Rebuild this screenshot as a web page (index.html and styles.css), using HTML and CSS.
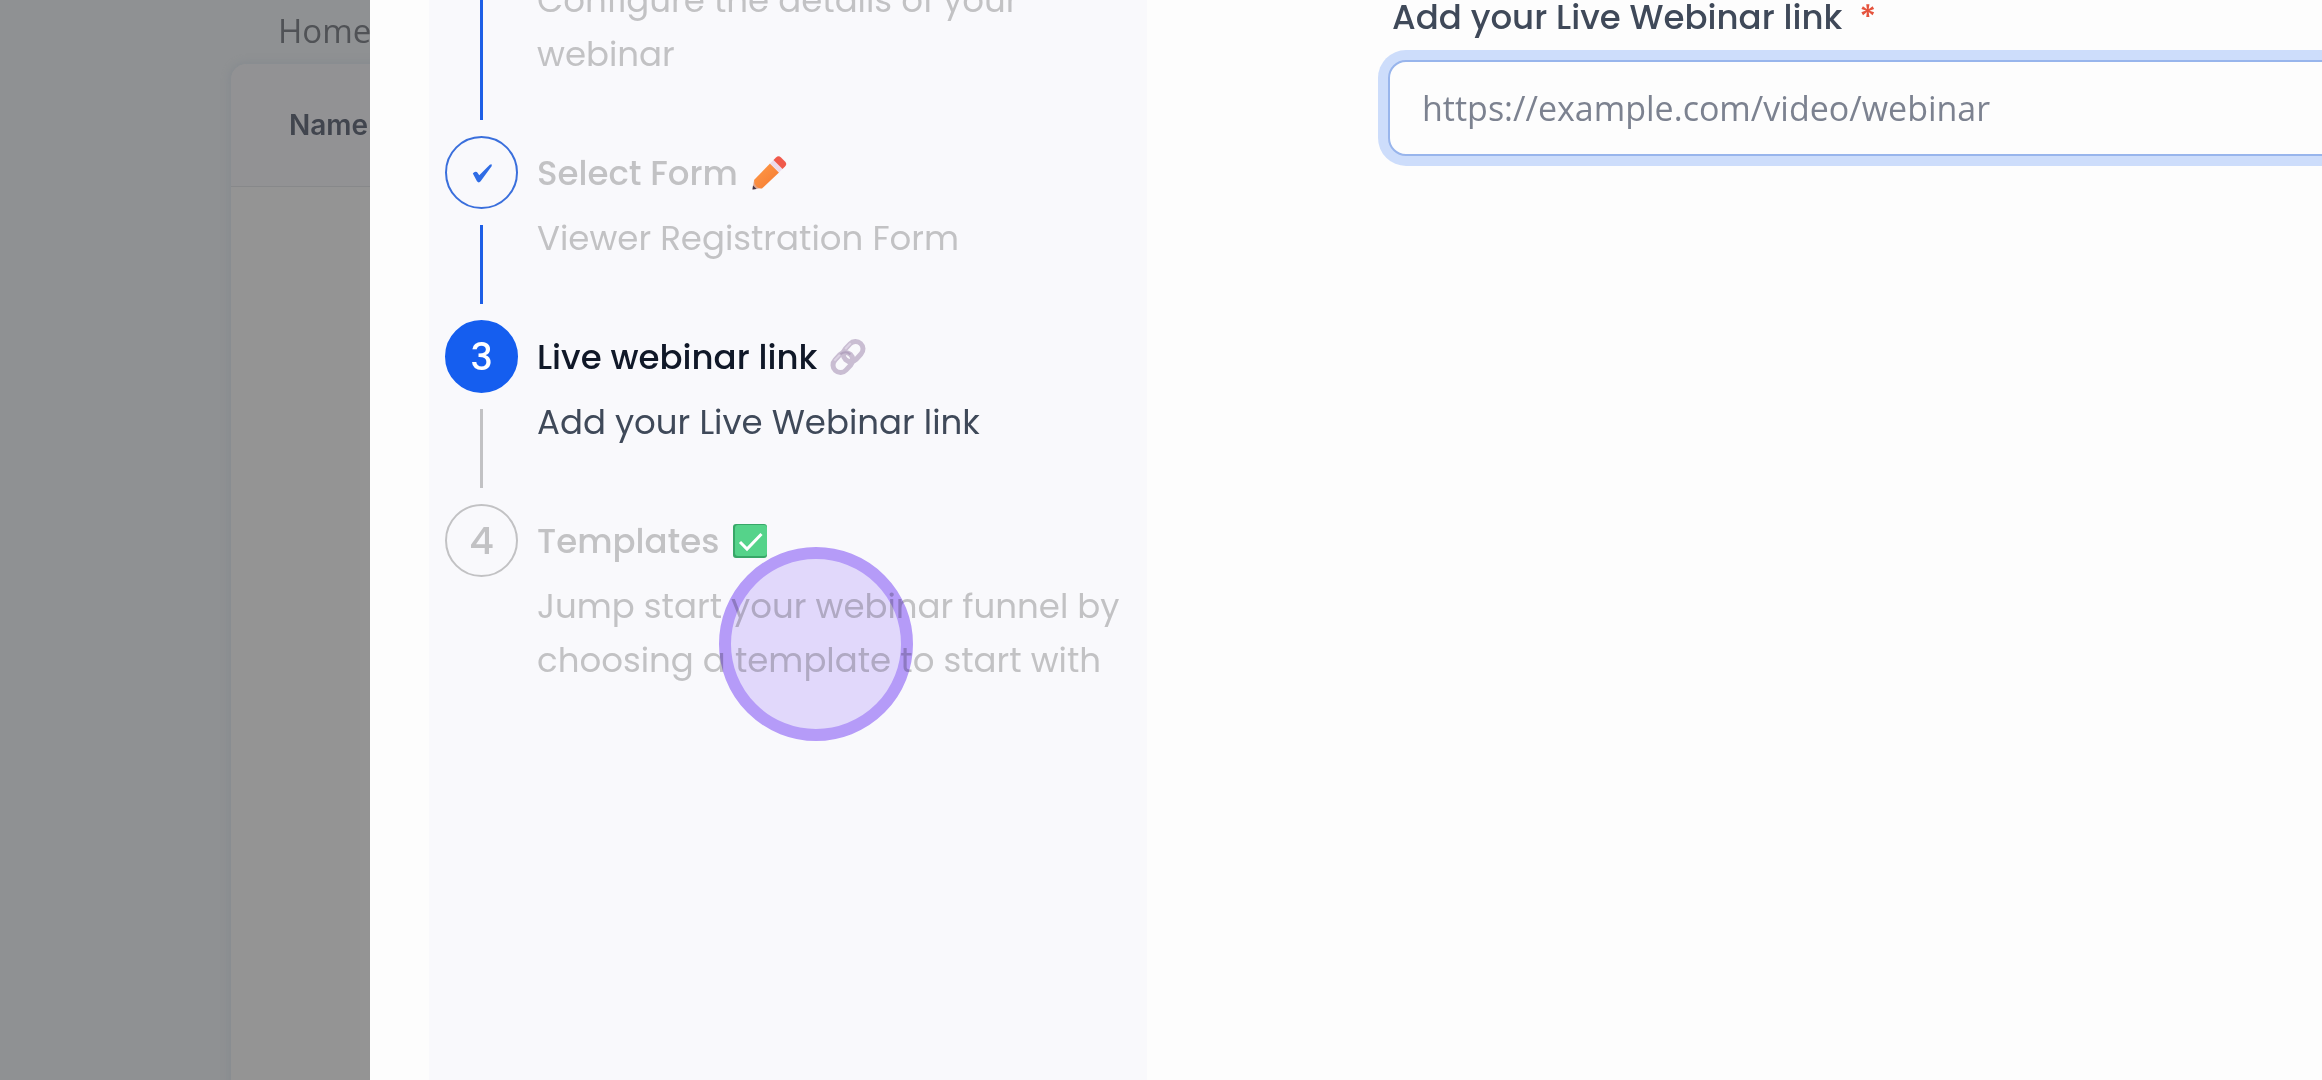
FILE: index.html
```html
<!DOCTYPE html>
<html lang="en">
<head>
<meta charset="utf-8">
<meta name="viewport" content="width=device-width, initial-scale=1">
<title>Live webinar link</title>
<link rel="stylesheet" href="styles.css">
</head>
<body>
<div class="app">
  <div class="backdrop">
    <a class="crumb" href="#">Home</a>
    <table class="list">
      <thead><tr><th scope="col">Name</th></tr></thead>
      <tbody><tr><td></td></tr></tbody>
    </table>
  </div>
  <main class="drawer">
    <ol class="steps">
      <li class="step done">
        <div class="rail"><span class="dot"></span><span class="line"></span></div>
        <div class="info">
          <h2 class="title"></h2>
          <p class="desc">Configure the details of your webinar</p>
        </div>
      </li>
      <li class="step done">
        <div class="rail">
          <span class="dot"><svg class="tick" viewBox="0 0 24 24" aria-hidden="true"><path d="M2 12.500 Q4 9.500 6.500 11 L9 14.500 L20.500 3 Q23.500 1.500 22.500 4.500 L10.500 21 Q8.500 23.500 6.500 21 Z"/></svg></span>
          <span class="line"></span>
        </div>
        <div class="info">
          <h2 class="title">Select Form
            <svg class="icon" viewBox="0 0 34 34" aria-hidden="true">
              <defs><linearGradient id="wood" x1="0" y1="0" x2="1" y2="1"><stop offset="0" stop-color="#ff9c4a"/><stop offset="1" stop-color="#f5782f"/></linearGradient></defs>
              <path fill="#e0a58d" d="M0.500 33.500 L2 24.500 L9.500 32 Z"/>
              <path fill="#3d3448" d="M0.500 33.500 L1 29.500 L4.500 33 Z"/>
              <path fill="url(#wood)" d="M2 24 L18 7.500 L27 16.500 L10 32.500 Q7 33 4.500 30.500 Q2 28 2 24 Z"/>
              <path fill="#ecdcec" d="M18 7.500 L21.500 4 L30.500 13 L27 16.500 Z"/>
              <path fill="#f05a4c" d="M21.500 4 L24 1.500 Q26.500 -1 29 1.500 L33 5.500 Q35.500 8 33 10.500 L30.500 13 Z"/>
            </svg>
          </h2>
          <p class="desc">Viewer Registration Form</p>
        </div>
      </li>
      <li class="step current" aria-current="step">
        <div class="rail"><span class="dot">3</span><span class="line"></span></div>
        <div class="info">
          <h2 class="title">Live webinar link
            <svg class="icon" viewBox="0 0 34 34" aria-hidden="true" fill="none">
              <g transform="rotate(-47 17 17)">
                <rect x="-1.500" y="9.500" width="22" height="15" rx="7.500" stroke="#c9bdd2" stroke-width="5"/>
                <rect x="13.500" y="9.500" width="22" height="15" rx="7.500" stroke="#c9bdd2" stroke-width="5"/>
                <path d="M5 9.500 H13 M21 9.500 H29" stroke="#ddd3e4" stroke-width="2"/>
                <path d="M14 9.500 Q20.500 11 20.500 17" stroke="#b3a3bf" stroke-width="2"/>
              </g>
            </svg>
          </h2>
          <p class="desc">Add your Live Webinar link</p>
        </div>
      </li>
      <li class="step">
        <div class="rail"><span class="dot">4</span></div>
        <div class="info">
          <h2 class="title">Templates
            <svg class="icon" viewBox="0 0 34 34" aria-hidden="true">
              <rect width="34" height="34" rx="3" fill="#38a768"/>
              <rect x="2" y="1" width="32" height="31" rx="3" fill="#55d38a"/>
              <path d="M7 18 L14 25 L28.500 10" fill="none" stroke="#fff" stroke-width="3"/>
            </svg>
          </h2>
          <p class="desc">Jump start your webinar funnel by choosing a template to start with</p>
        </div>
      </li>
    </ol>
    <form class="form">
      <label class="label" for="link">Add your Live Webinar link <span class="required">*</span></label>
      <input class="field" id="link" type="url" placeholder="https://example.com/video/webinar" required>
    </form>
  </main>
  <span class="pointer" aria-hidden="true"></span>
</div>
</body>
</html>
```
FILE: styles.css
```css
* { box-sizing: border-box; }

body {
  margin: 0;
  font-family: Poppins, Inter, "Liberation Sans", sans-serif;
  font-size: 34px;
  line-height: 54px;
}

.app {
  position: relative;
  display: flex;
  height: 100vh;
  overflow: hidden;
}

.backdrop {
  flex: 0 0 370px;
  display: flex;
  flex-direction: column;
  overflow: hidden;
  padding: 4px 0 0 230px;
  background: #8f9193;
}

.crumb {
  padding-left: 48px;
  margin-bottom: 5px;
  color: #505256;
  font-family: "Open Sans", "Noto Sans", sans-serif;
  font-size: 33px;
  text-decoration: none;
}

.list {
  flex: 1;
  width: 480px;
  display: flex;
  flex-direction: column;
  margin-bottom: -24px;
  background: #949494;
  border: 1px solid #898d91;
  border-radius: 16px;
  box-shadow: 0 0 8px #84898e;
}

.list thead {
  background: #929294;
  border-bottom: 1px solid #87888a;
  border-radius: 16px 16px 0 0;
}

.list th {
  padding: 32px 56px;
  color: #41454e;
  font-family: Inter, sans-serif;
  font-size: 28px;
  font-weight: 600;
}

.drawer {
  flex: 1;
  display: flex;
  min-width: 0;
  background: #fdfdfd;
}

.steps {
  flex: 0 0 718px;
  margin: -102px 0 0 59px;
  padding: 0 16px;
  list-style: none;
  background: #f9f9fc;
}

.step {
  display: flex;
  gap: 19px;
  color: #c2c2c4;
}

.rail {
  flex: 0 0 73px;
  display: flex;
  flex-direction: column;
  align-items: center;
  gap: 16px;
  padding-bottom: 16px;
}

.dot {
  display: flex;
  align-items: center;
  justify-content: center;
  flex: 0 0 73px;
  width: 73px;
  border: 2px solid #c2c2c4;
  border-radius: 50%;
  font-size: 38px;
  font-weight: 500;
}

.line {
  flex: 1;
  width: 3px;
  background: #c2c2c4;
}

.done .dot { border-color: #3a6fdc; }
.done .line { background: #1e5fe6; }

.tick {
  width: 26px;
  height: 22px;
  fill: #2f6ce5;
}

.current .dot {
  border-color: #155eef;
  background: #155eef;
  color: #fff;
}

.info {
  flex: 1;
  padding-bottom: 55px;
}

.title {
  display: flex;
  align-items: center;
  gap: 14px;
  height: 73px;
  margin: 0 0 2px;
  font-size: 34px;
  font-weight: 500;
}

.desc { margin: 0; }

.current .title { color: #101828; }
.current .desc { color: #3f4959; }

.icon {
  width: 34px;
  height: 34px;
  overflow: visible;
}

.form {
  flex: 1;
  display: flex;
  flex-direction: column;
  gap: 16px;
  min-width: 0;
  margin: -10px -80px 0 0;
  padding-left: 241px;
}

.label {
  padding-left: 4px;
  color: #3f4959;
  font-weight: 500;
}

.required {
  margin-left: 8px;
  color: #e5533d;
}

.field {
  height: 96px;
  padding: 0 32px;
  border: 2px solid #98b5ec;
  border-radius: 18px;
  outline: none;
  background: #fdfdfd;
  box-shadow: 0 0 0 10px #cdddfb;
  color: #3f4959;
  font-family: "Open Sans", "Noto Sans", sans-serif;
  font-size: 34px;
}

.field::placeholder {
  color: #7c8290;
  opacity: 1;
}

/* Touch marker floating over the page */
.pointer {
  position: absolute;
  left: 719px;
  top: 547px;
  width: 194px;
  height: 194px;
  border: 12px solid #ba9ffb;
  border-radius: 50%;
  background: #e7defe;
  mix-blend-mode: multiply;
  pointer-events: none;
}
```
